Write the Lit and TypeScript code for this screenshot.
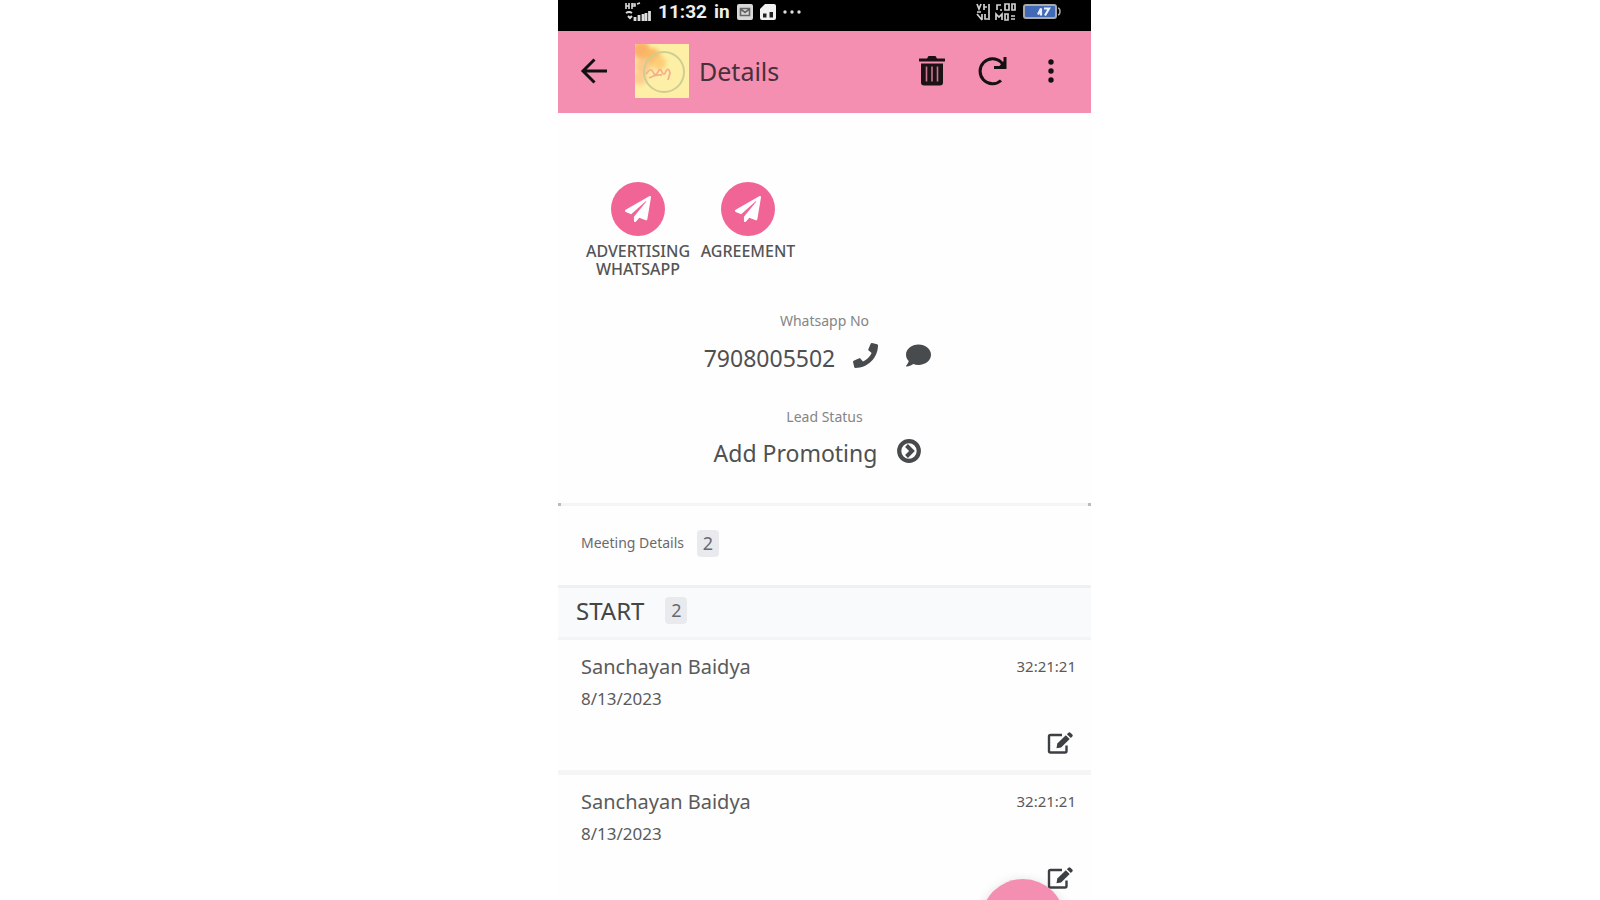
import { LitElement, html, css, svg } from "lit";
import { customElement, property } from "lit/decorators.js";

interface Meeting {
  name: string;
  date: string;
  time: string;
}

const planeIcon = html`<svg viewBox="0 0 512 512" width="26" height="26" fill="currentColor" aria-hidden="true">
  <path d="M476 3.200 12.500 270.600c-18.100 10.400-15.800 35.600 2.200 43.200L121 358.400l287.300-253.200c5.500-4.900 13.300 2.600 8.600 8.300L176 407v80.500c0 23.600 28.500 32.900 42.500 15.800L282 426l124.600 52.200c14.200 6 30.400-2.900 33-18.200l72-432C515 7.800 493.300-6.800 476 3.200z" />
</svg>`;

const phoneIcon = html`<svg viewBox="0 0 512 512" width="25" height="25" fill="currentColor" aria-hidden="true">
  <path d="M493.400 24.600l-104-24c-11.300-2.600-22.900 3.300-27.500 13.900l-48 112c-4.200 9.800-1.400 21.300 6.900 28l60.600 49.600c-36 76.700-98.900 140.500-177.200 177.200l-49.600-60.600c-6.800-8.300-18.200-11.100-28-6.900l-112 48C3.900 366.500-2 378.100.6 389.400l24 104C27.100 504.200 36.700 512 48 512c256.100 0 464-207.500 464-464 0-11.200-7.700-20.900-18.600-23.400z" />
</svg>`;

const commentIcon = html`<svg viewBox="0 0 512 512" width="25" height="25" fill="currentColor" aria-hidden="true">
  <path d="M256 32C114.600 32 0 125.100 0 240c0 49.600 21.400 95 57 130.700C44.500 421.100 2.700 466 2.200 466.500c-2.200 2.300-2.800 5.700-1.500 8.700S4.800 480 8 480c66.300 0 116-31.800 140.600-51.400 32.700 12.300 69 19.400 107.400 19.400 141.400 0 256-93.100 256-208S397.400 32 256 32z" />
</svg>`;

const chevronIcon = html`<svg viewBox="0 0 24 24" width="24" height="24" aria-hidden="true">
  <circle cx="12" cy="12" r="9.800" fill="none" stroke="currentColor" stroke-width="4.200" />
  <path d="M9.500 6.500 15 12l-5.500 5.500" fill="none" stroke="currentColor" stroke-width="4" />
</svg>`;

const editIcon = html`<svg viewBox="0 0 26 24" width="26" height="24" fill="none" stroke="currentColor" aria-hidden="true">
  <path d="M15 4H3.500Q2 4 2 5.500v14.500q0 1.500 1.500 1.500h14.500q1.500 0 1.500-1.500v-5.500" stroke-width="2.400" />
  <path d="M9.500 17.200l.8-4.600L18.800 4.200l3.900 3.900-8.600 8.300z" fill="currentColor" stroke="none" />
  <path d="M19.900 3.200l1.500-1.500q1-.9 2 0l1.900 1.900q.9 1 0 2l-1.500 1.500z" fill="currentColor" stroke="none" />
</svg>`;

const signalIcon = html`<svg viewBox="0 0 26 20" width="26" height="20" fill="none" stroke="#dcdcdc" aria-hidden="true">
  <path d="M1 1v6M4 1v6M1 4h3M7 1v6M7 2h3v2H7M12 2l3-1" stroke-width="1.600" />
  <path d="M1 11q3-2 6 0M3 14l2 2 2-2" stroke-width="2" />
  <path d="M10 19v-4M14 19v-6M18 19v-7M21 19v-8M24.500 19V9" stroke-width="2.800" />
</svg>`;

const inboxIcon = html`<svg viewBox="0 0 16 16" width="16" height="16" aria-hidden="true">
  <rect width="16" height="16" rx="2" fill="#d8d8d8" />
  <path d="M3.500 4.500h9v7h-9zM3.500 5l4.500 3.500L12.500 5" fill="none" stroke="#666" stroke-width="1.600" />
</svg>`;

const simIcon = html`<svg viewBox="0 0 16 16" width="16" height="16" aria-hidden="true">
  <path d="M5 0h9q2 0 2 2v12q0 2-2 2H2q-2 0-2-2V5z" fill="#f2f2f2" />
  <path d="M3 9.500h3.500v4H3zM9.500 8H13v5.500H9.500z" fill="#222" />
</svg>`;

const overflowDots = html`<svg viewBox="0 0 18 4" width="18" height="4" fill="#ddd" aria-hidden="true">
  <circle cx="2" cy="2" r="1.700" /><circle cx="9" cy="2" r="1.700" /><circle cx="16" cy="2" r="1.700" />
</svg>`;

const networkIcon = html`<svg viewBox="0 0 40 18" width="40" height="18" fill="none" stroke="#d0d0d0" aria-hidden="true">
  <path d="M1 1l2 5 2-5M8 1v6M8 4h3M13 1v16M1 11l5 6M6 11v6M9 11v5h3M1 9h4" stroke-width="1.700" />
  <path d="M21 7V2h4M24 7h2M29 1v6h4V1zM36 1v6h3V1zM20 17v-6l3 3 3-3v6M29 11v6h3v-6zM35 16h4M35 13h4" stroke-width="1.700" />
</svg>`;

const batteryIcon = html`<svg viewBox="0 0 38 15" width="38" height="15" aria-hidden="true">
  <rect x="1" y="1" width="32" height="13" rx="2" fill="#4169b5" stroke="#aaa" stroke-width="2" />
  <path d="M35 4q2 .5 2 3.500t-2 3.500" fill="none" stroke="#aaa" stroke-width="1.500" />
  <path d="M15 10.500l3-6v7M21 4.500h5l-4 7" fill="none" stroke="#e8f0ff" stroke-width="2.200" />
</svg>`;

const backIcon = html`<svg viewBox="0 0 28 26" width="28" height="26" fill="none" stroke="#111" stroke-width="3" aria-hidden="true">
  <path d="M27 13H3M14.500 1.500 3 13l11.500 11.500" />
</svg>`;

const trashIcon = html`<svg viewBox="0 0 26 30" width="26" height="30" aria-hidden="true">
  <path d="M0 2.500h8l1.500-2.500h7L18 2.500h8v3H0z" fill="#1c1216" />
  <path d="M2 7.500h22v19q0 3-3 3H5q-3 0-3-3z" fill="#1c1216" />
  <path d="M7.500 10.500v15M13 10.500v15M18.500 10.500v15" stroke="#c87590" stroke-width="1.600" />
</svg>`;

const refreshIcon = html`<svg viewBox="0 0 31 30" width="31" height="30" fill="none" stroke="#151013" stroke-width="3" aria-hidden="true">
  <path d="M25 24.500A12.500 12.500 0 1 1 25 6l3.500 5" />
  <path d="M18 11.500h11V1" />
  <path d="M29 4v7.500h-7z" fill="#151013" stroke="none" />
</svg>`;

const moreIcon = html`<svg viewBox="0 0 6 26" width="6" height="26" fill="#151013" aria-hidden="true">
  <circle cx="3" cy="4" r="2.700" /><circle cx="3" cy="13" r="2.700" /><circle cx="3" cy="22" r="2.700" />
</svg>`;

const petals = [
  [6, 6, 9, "#f9b268"],
  [17, 13, 9, "#fbb964"],
  [8, 22, 8, "#fcc98a"],
  [24, 19, 7, "#fdce78"],
  [5, 34, 7, "#fdce90"],
] as const;

const logo = html`<svg viewBox="0 0 54 54" width="54" height="54" role="img" aria-label="Logo">
  <defs>
    <filter id="wash"><feGaussianBlur stdDeviation="2" /></filter>
    <clipPath id="frame"><rect width="54" height="54" /></clipPath>
  </defs>
  <rect width="54" height="54" fill="#fdf0a6" />
  <g clip-path="url(#frame)">
    <g filter="url(#wash)">
      ${petals.map(([x, y, r, fill]) => svg`<circle cx=${x} cy=${y} r=${r} fill=${fill} />`)}
    </g>
  </g>
  <circle cx="29" cy="28" r="20" fill="none" stroke="#cfcd90" stroke-width="2" />
  <path d="M11 30q5-7 7-2t5 0q2-5 4 0t4-1q3-4 4 2l-2 7M14 34q7-4 13-3" fill="none" stroke="#f7ae8c" stroke-width="1.800" />
</svg>`;

@customElement("count-badge")
class CountBadge extends LitElement {
  @property({ type: Number }) value = 0;

  static styles = css`
    :host {
      display: inline-flex;
      align-items: center;
      justify-content: center;
      min-width: 22px;
      height: 27px;
      border-radius: 4px;
      background: #e9eaed;
      color: #666a6e;
      font-size: 18px;
      line-height: 27px;
    }
  `;

  render() {
    return html`${this.value}`;
  }
}

@customElement("meeting-row")
class MeetingRow extends LitElement {
  @property({ attribute: false }) meeting!: Meeting;

  static styles = css`
    :host {
      display: grid;
      grid-template-columns: 1fr auto;
      box-sizing: border-box;
      height: 135px;
      padding: 12px 15px 0 23px;
      align-content: start;
      border-bottom: 5px solid #f5f5f5;
      color: #5a5a5a;
    }
    .name {
      font-size: 20px;
      line-height: 30px;
    }
    .date {
      grid-column: 1 / -1;
      font-size: 17px;
      line-height: 34px;
    }
    .time {
      font-size: 15px;
      line-height: 28px;
    }
    .edit {
      grid-column: 2;
      justify-self: end;
      display: flex;
      margin: 15px 3px 0 0;
      padding: 0;
      border: 0;
      background: none;
      color: #3c4044;
      cursor: pointer;
    }
  `;

  render() {
    return html`
      <span class="name">${this.meeting.name}</span>
      <span class="time">${this.meeting.time}</span>
      <span class="date">${this.meeting.date}</span>
      <button class="edit" aria-label="Edit meeting">${editIcon}</button>
    `;
  }
}

@customElement("app-root")
class AppRoot extends LitElement {
  private actions = ["Advertising Whatsapp", "Agreement"];

  private meetings: Meeting[] = [
    { name: "Sanchayan Baidya", date: "8/13/2023", time: "32:21:21" },
    { name: "Sanchayan Baidya", date: "8/13/2023", time: "32:21:21" },
  ];

  static styles = css`
    :host {
      display: grid;
      grid-template-columns: 558fr minmax(320px, 533fr) 509fr;
      height: 100vh;
      overflow: hidden;
      background: #fff;
      font-family: "Noto Sans", sans-serif;
      color: #505050;
    }
    button {
      display: flex;
      padding: 0;
      border: 0;
      background: none;
      color: inherit;
      font: inherit;
      cursor: pointer;
    }
    h1,
    h2,
    h3,
    p {
      margin: 0;
      font-weight: 400;
    }
    .screen {
      grid-column: 2;
      position: relative;
      overflow: hidden;
      background: #fefefe;
    }
    .status {
      display: flex;
      align-items: center;
      gap: 7px;
      height: 31px;
      padding: 0 30px 8px 67px;
      box-sizing: border-box;
      background: #000;
      color: #eee;
      font: 700 19px/22px Roboto, sans-serif;
    }
    .radio {
      margin-left: auto;
      display: flex;
    }
    .bar {
      display: flex;
      align-items: center;
      height: 82px;
      padding: 0 37px 2px 22px;
      box-sizing: border-box;
      background: #f48fb1;
      color: #47303a;
    }
    .logo {
      display: flex;
      margin: 0 10px 0 27px;
    }
    .title {
      flex: 1;
      font-size: 25px;
      line-height: 32px;
    }
    .tools {
      display: flex;
      align-items: center;
      gap: 31px;
    }
    .more {
      padding-left: 10px;
    }
    .actions {
      display: flex;
      padding: 69px 25px 0;
    }
    .action {
      flex-direction: column;
      align-items: center;
      width: 110px;
      gap: 6px;
      font-size: 16px;
      font-weight: 500;
      line-height: 18px;
      text-transform: uppercase;
      color: #555;
    }
    .disc {
      display: grid;
      place-items: center;
      width: 54px;
      height: 54px;
      border-radius: 50%;
      background: #f06595;
      color: #fff;
    }
    .fields {
      padding-top: 33px;
    }
    .field {
      display: flex;
      flex-direction: column;
      align-items: center;
      gap: 12px;
      height: 96px;
    }
    .label {
      font-size: 14px;
      line-height: 20px;
      color: #858585;
    }
    .value {
      display: flex;
      align-items: center;
      font-size: 23px;
      line-height: 28px;
      color: #505050;
    }
    .value button {
      color: #484b4e;
      padding-bottom: 4px;
    }
    .call {
      margin: 0 28px 0 18px;
    }
    .change {
      margin-left: 20px;
    }
    .phone,
    .stage {
      padding-right: 14px;
    }
    .related {
      display: flex;
      align-items: center;
      gap: 13px;
      height: 82px;
      padding: 0 23px 2px;
      box-sizing: border-box;
      background:
        linear-gradient(#bbb, #bbb) left top / 3px 3px no-repeat,
        linear-gradient(#bbb, #bbb) right top / 3px 3px no-repeat,
        linear-gradient(#f5f5f5, #f5f5f5) left top / 100% 3px no-repeat;
      color: #6a6a6a;
    }
    .related h2 {
      font-size: 14px;
      line-height: 20px;
    }
    .group {
      display: flex;
      align-items: center;
      gap: 21px;
      height: 55px;
      padding: 0 18px 4px;
      box-sizing: border-box;
      border-top: 3px solid #eef1f2;
      border-bottom: 3px solid #f2f4f5;
      background: #f8fafc;
      color: #454545;
    }
    .group h3 {
      font-size: 24px;
      line-height: 34px;
    }
    .add {
      position: absolute;
      right: 26px;
      bottom: -63px;
      width: 84px;
      height: 84px;
      border-radius: 50%;
      background: #f48fb1;
      box-shadow: 0 2px 12px rgba(0, 0, 0, 0.14);
    }
  `;

  render() {
    return html`
      <main class="screen">
        <div class="status">
          ${signalIcon}<span>11:32</span><span>in</span>${inboxIcon}${simIcon}${overflowDots}
          <span class="radio">${networkIcon}</span>${batteryIcon}
        </div>
        <header class="bar">
          <button aria-label="Back">${backIcon}</button>
          <span class="logo">${logo}</span>
          <h1 class="title">Details</h1>
          <div class="tools">
            <button aria-label="Delete">${trashIcon}</button>
            <button aria-label="Refresh">${refreshIcon}</button>
            <button class="more" aria-label="More options">${moreIcon}</button>
          </div>
        </header>
        <nav class="actions">
          ${this.actions.map(
            (name) => html`<button class="action"><span class="disc">${planeIcon}</span><span>${name}</span></button>`
          )}
        </nav>
        <section class="fields">
          <div class="field">
            <p class="label">Whatsapp No</p>
            <div class="value phone">
              <span>7908005502</span>
              <button class="call" aria-label="Call">${phoneIcon}</button>
              <button aria-label="Message">${commentIcon}</button>
            </div>
          </div>
          <div class="field">
            <p class="label">Lead Status</p>
            <div class="value stage">
              <span>Add Promoting</span>
              <button class="change" aria-label="Change status">${chevronIcon}</button>
            </div>
          </div>
        </section>
        <div class="related">
          <h2>Meeting Details</h2>
          <count-badge .value=${this.meetings.length}></count-badge>
        </div>
        <div class="group">
          <h3>START</h3>
          <count-badge .value=${this.meetings.length}></count-badge>
        </div>
        ${this.meetings.map((meeting) => html`<meeting-row .meeting=${meeting}></meeting-row>`)}
        <button class="add" aria-label="Add meeting"></button>
      </main>
    `;
  }
}
